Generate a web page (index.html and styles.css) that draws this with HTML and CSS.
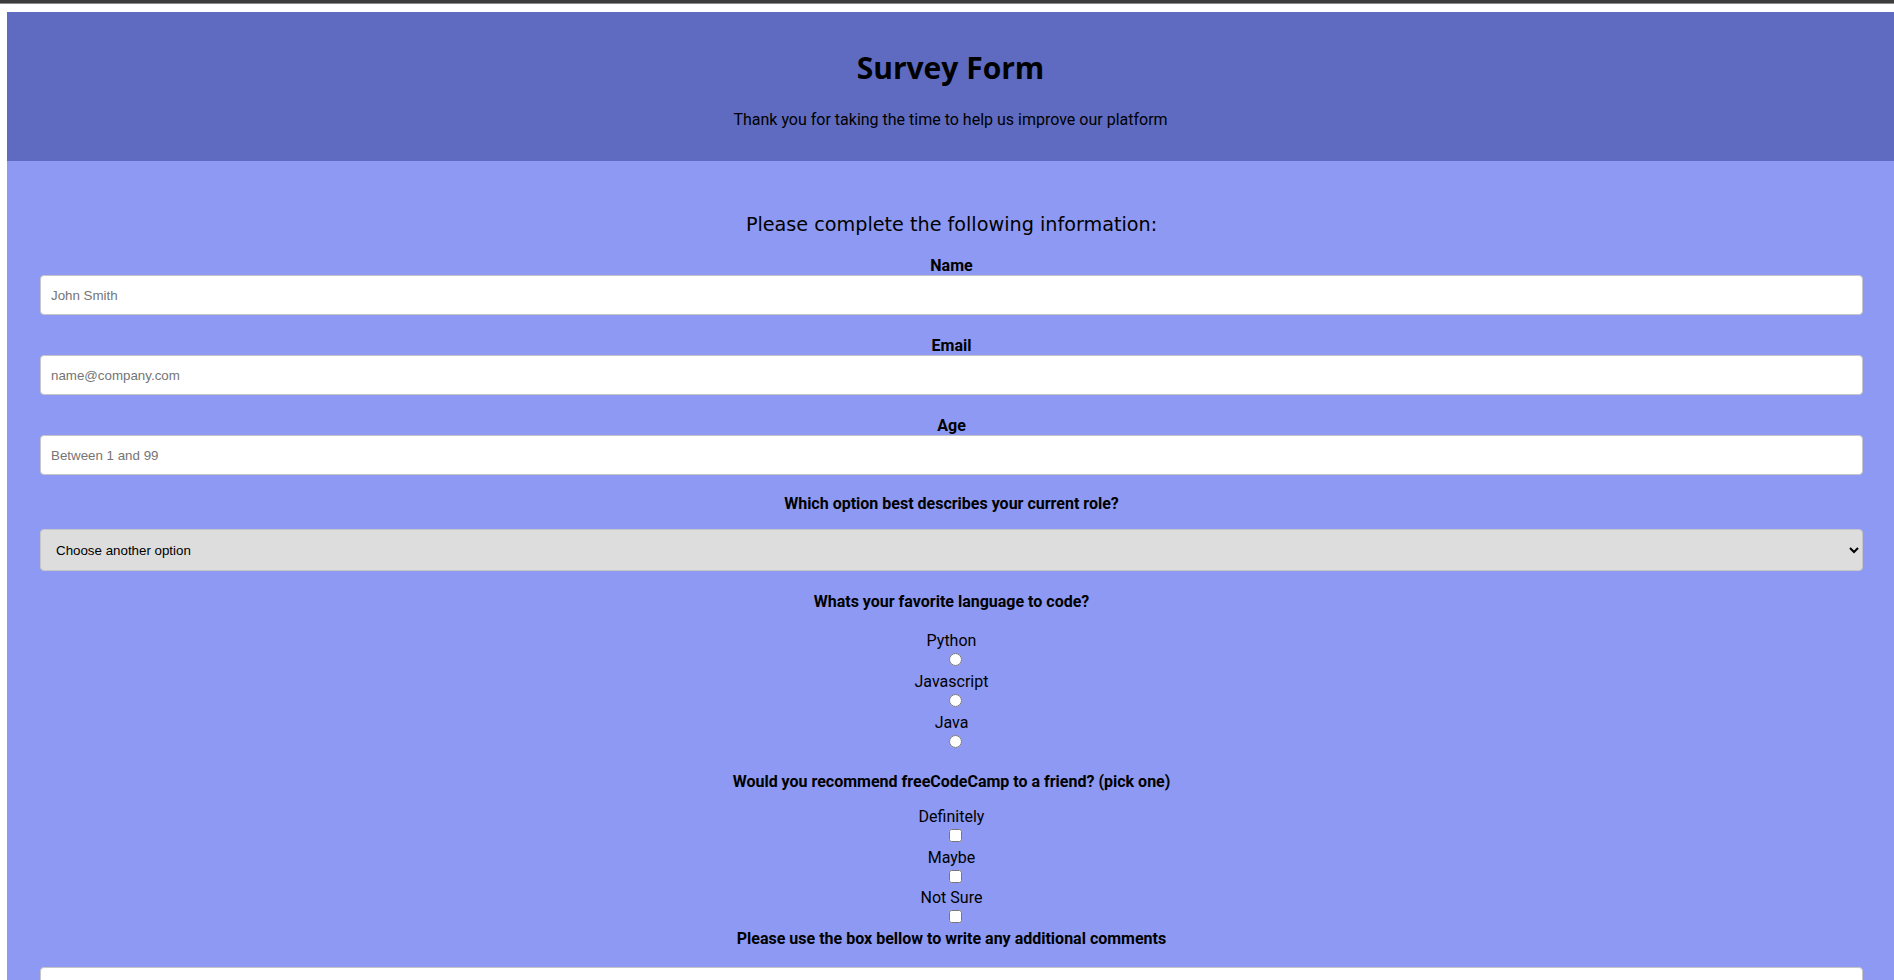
FILE: index.html
```html
<!DOCTYPE html>
<html lang="en">
<head>
<meta charset="utf-8">
<title>Survey Form</title>
<link rel="stylesheet" href="styles.css">
</head>
<body>
<div class="topbar"></div>
<div class="page">
  <header class="masthead">
    <h1 id="title" class="title">Survey Form</h1>
    <p id="description" class="subtitle">Thank you for taking the time to help us improve our platform</p>
  </header>
  <main class="panel">
    <form id="survey-form" class="survey">
      <h2 class="intro">Please complete the following information:</h2>

      <div class="field">
        <label class="label" for="name">Name</label>
        <input class="text-input" id="name" type="text" placeholder="John Smith">
      </div>
      <div class="field">
        <label class="label" for="email">Email</label>
        <input class="text-input" id="email" type="email" placeholder="name@company.com">
      </div>
      <div class="field field-last">
        <label class="label" for="number">Age</label>
        <input class="text-input" id="number" type="number" placeholder="Between 1 and 99">
      </div>

      <label class="label" for="dropdown">Which option best describes your current role?</label>
      <select class="select" id="dropdown">
        <option>Choose another option</option>
        <option>Student</option>
        <option>Full Time Job</option>
        <option>Prefer not to say</option>
      </select>

      <p class="label group-title">Whats your favorite language to code?</p>
      <div class="choices choices-radio">
        <label class="choice"><span class="choice-text">Python</span><input class="choice-box" type="radio" name="lang" value="python"></label>
        <label class="choice"><span class="choice-text">Javascript</span><input class="choice-box" type="radio" name="lang" value="javascript"></label>
        <label class="choice"><span class="choice-text">Java</span><input class="choice-box" type="radio" name="lang" value="java"></label>
      </div>

      <p class="label group-title group-title-check">Would you recommend freeCodeCamp to a friend? (pick one)</p>
      <div class="choices">
        <label class="choice"><span class="choice-text">Definitely</span><input class="choice-box" type="checkbox" value="definitely"></label>
        <label class="choice"><span class="choice-text">Maybe</span><input class="choice-box" type="checkbox" value="maybe"></label>
        <label class="choice"><span class="choice-text">Not Sure</span><input class="choice-box" type="checkbox" value="not-sure"></label>
      </div>

      <label class="label" for="comments">Please use the box bellow to write any additional comments</label>
      <textarea class="comments" id="comments" rows="6"></textarea>
    </form>
  </main>
</div>
</body>
</html>
```

FILE: styles.css
```css
html, body {
  margin: 0;
  padding: 0;
  background: #ffffff;
}

body {
  font-family: Roboto, "Liberation Sans", Arial, sans-serif;
  font-size: 16px;
  color: #000;
  overflow: hidden;
}

.topbar {
  height: 3px;
  background: #3c3c3c;
  border-bottom: 1px solid #8a8a8a;
}

.page {
  margin: 8px 0 0 7px;
}

.masthead {
  background: #5e6bc1;
  text-align: center;
  padding: 36px 0 31px;
}

.title {
  margin: 0;
  font-family: "Open Sans", "Noto Sans", sans-serif;
  font-weight: 700;
  font-size: 30px;
  line-height: 40px;
}

.subtitle {
  margin: 22px 0 0;
  font-size: 16px;
  line-height: 20px;
}

.panel {
  background: #8d99f2;
  padding: 53px 31px 40px 33px;
}

.survey {
  display: flex;
  flex-direction: column;
  align-items: stretch;
  text-align: center;
}

.intro {
  margin: 0 0 20px;
  font-family: "DejaVu Sans", Verdana, sans-serif;
  font-weight: 400;
  font-size: 19.2px;
  line-height: 22px;
}

.field {
  display: flex;
  flex-direction: column;
  margin-bottom: 21px;
}

.field-last {
  margin-bottom: 19px;
}

.label {
  display: block;
  margin: 0;
  font-weight: 700;
  font-size: 16px;
  line-height: 19px;
}

.text-input,
.comments {
  box-sizing: border-box;
  width: 100%;
  border: 1px solid #c6c6c6;
  border-radius: 4px;
  background: #fff;
  font-family: "Liberation Sans", Arial, sans-serif;
  font-size: 13.33px;
  padding: 0 10px;
}

.text-input {
  height: 40px;
}

.select {
  box-sizing: border-box;
  width: 100%;
  height: 42px;
  margin-top: 16px;
  padding: 0 11px;
  background: #dddddd;
  color: #000;
  border: 1px solid #c6c6c6;
  border-radius: 4px;
  font-family: "Liberation Sans", Arial, sans-serif;
  font-size: 13.33px;
}

.group-title {
  margin-top: 21px;
  margin-bottom: 20px;
}

.group-title-check {
  margin-top: 18.5px;
  margin-bottom: 16px;
}

.choices {
  display: flex;
  flex-direction: column;
}

.choice {
  display: flex;
  flex-direction: column;
  align-items: center;
}

.choice-text {
  line-height: 19px;
}

.choice-box {
  width: 13px;
  height: 13px;
  margin: 3px 0 5.75px 8px;
}

.comments {
  margin-top: 19px;
  height: 120px;
  resize: vertical;
}
```
